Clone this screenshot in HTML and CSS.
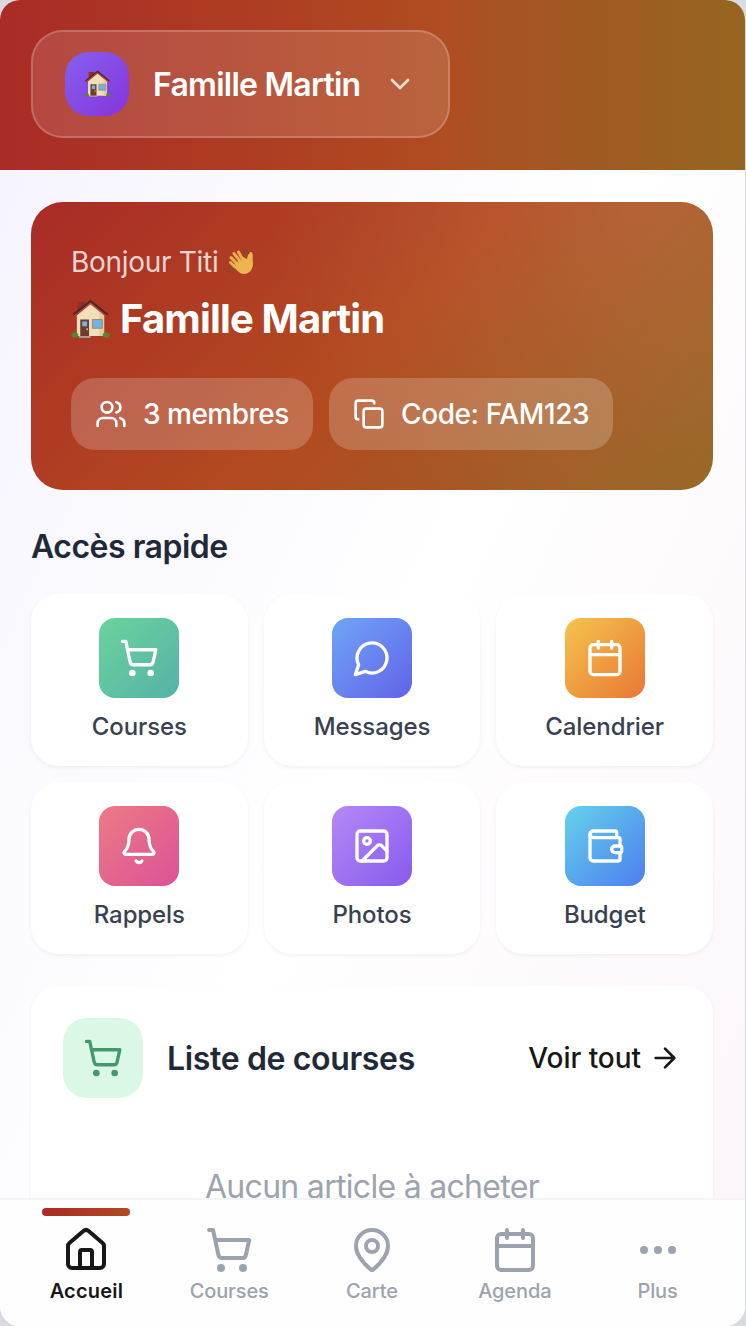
FILE: index.html
```html
<!DOCTYPE html>
<html lang="fr">
<head>
    <meta charset="UTF-8">
    <meta name="viewport" content="width=device-width, initial-scale=1.0">
    <title>Famille Martin</title>
    <link rel="stylesheet" href="styles.css">
</head>
<body>
    <!-- Shared icons -->
    <svg class="symbols" xmlns="http://www.w3.org/2000/svg">
        <symbol id="cart" viewBox="0 0 24 24">
            <circle cx="8" cy="21" r="1"/>
            <circle cx="19" cy="21" r="1"/>
            <path d="M2.05 2.05h2l2.66 12.42a2 2 0 0 0 2 1.58h9.78a2 2 0 0 0 1.95-1.57l1.65-7.43H5.12"/>
        </symbol>
        <symbol id="calendar" viewBox="0 0 24 24">
            <path d="M8 2v4M16 2v4M3 10h18"/>
            <rect x="3" y="4" width="18" height="18" rx="2"/>
        </symbol>
        <symbol id="house" viewBox="0 0 40 40">
            <path d="M7 3h8v12H7z" fill="#8e2f2c"/>
            <path d="M6 17 20 4l14 13v21H6z" fill="#f0dfb8"/>
            <path d="M29 13l5 4v21h-5z" fill="#e2cd9f"/>
            <path d="M2.500 16.500 20 2.500l17.500 14" fill="none" stroke="#4a2826" stroke-width="2.800"/>
            <path d="M3.500 17.500 20 4.500l16.500 13" fill="none" stroke="#bd4139" stroke-width="1.700"/>
            <path d="M9.500 21h9v17h-9z" fill="#6d3c2e"/>
            <path d="M11.500 23h5v5h-5z" fill="#72b5ea"/>
            <circle cx="16.500" cy="31" r="1" fill="#e5c365"/>
            <path d="M22 21h10v9H22z" fill="#6fb1e8" stroke="#a58d6c" stroke-width="1.200"/>
            <path d="M8 38h12v1.800H8z" fill="#aaa79d"/>
            <ellipse cx="4" cy="37" rx="3.500" ry="2.600" fill="#588532"/>
            <ellipse cx="36" cy="37" rx="3.500" ry="2.600" fill="#588532"/>
        </symbol>
    </svg>

    <div class="app">
        <header class="header">
            <button class="family-switch">
                <span class="family-avatar"><svg class="emoji"><use href="#house"/></svg></span>
                <span class="family-name">Famille Martin</span>
                <svg class="icon chevron" viewBox="0 0 24 24"><path d="m6 9 6 6 6-6"/></svg>
            </button>
        </header>

        <main class="content">
            <!-- Welcome card -->
            <section class="hero">
                <div class="hello"><span>Bonjour Titi</span>
                    <svg class="wave" viewBox="0 0 28 28">
                        <path d="M8 19 3.500 14.500M10 16 4 9.500M13 13 7 5.500M16 12 11.500 4" stroke="#e9ad4b" stroke-width="3" stroke-linecap="round"/>
                        <path d="M6 17 16 9l4 2c1-5 2-7 4-7 3 1 1 6 2 11 0 7-4 11-9 11-4 0-7-3-11-9z" fill="#eeb44f"/>
                        <path d="M9 18 4.500 13M11.500 15 6 8.500M14.500 12.500 9.500 6" stroke="#b87931" stroke-width=".6"/>
                        <path d="M1 19c0 3 2 5 5 6M3.500 18c0 2 1.500 3.500 3.500 4M17 2c3 0 4.500 2 5 4M15.500 4c2 0 3 1 3.500 3" fill="none" stroke="#804733" stroke-width="1.300"/>
                    </svg>
                </div>
                <h1><svg class="emoji"><use href="#house"/></svg><span>Famille Martin</span></h1>
                <div class="chips">
                    <div class="chip">
                        <svg class="icon" viewBox="0 0 24 24"><path d="M16 21v-2a4 4 0 0 0-4-4H6a4 4 0 0 0-4 4v2"/><circle cx="9" cy="7" r="4"/><path d="M22 21v-2a4 4 0 0 0-3-3.870M16 3.130a4 4 0 0 1 0 7.750"/></svg>
                        <span class="members">3 membres</span>
                    </div>
                    <div class="chip">
                        <svg class="icon" viewBox="0 0 24 24"><rect x="8" y="8" width="14" height="14" rx="2"/><path d="M4 16c-1.100 0-2-.9-2-2V4c0-1.100.9-2 2-2h10c1.100 0 2 .9 2 2"/></svg>
                        <span class="code">Code: FAM123</span>
                    </div>
                </div>
            </section>

            <!-- Quick access -->
            <h2>Accès rapide</h2>
            <div class="grid">
                <a class="tile">
                    <span class="tile-icon green"><svg class="icon"><use href="#cart"/></svg></span>
                    <span>Courses</span>
                </a>
                <a class="tile">
                    <span class="tile-icon blue"><svg class="icon" viewBox="0 0 24 24"><path d="M7.900 20A9 9 0 1 0 4 16.100L2 22Z"/></svg></span>
                    <span>Messages</span>
                </a>
                <a class="tile">
                    <span class="tile-icon orange"><svg class="icon"><use href="#calendar"/></svg></span>
                    <span>Calendrier</span>
                </a>
                <a class="tile">
                    <span class="tile-icon pink"><svg class="icon" viewBox="0 0 24 24"><path d="M10.268 21a2 2 0 0 0 3.464 0M3.262 15.326A1 1 0 0 0 4 17h16a1 1 0 0 0 .740-1.673C19.410 13.956 18 12.499 18 8A6 6 0 0 0 6 8c0 4.499-1.411 5.956-2.738 7.326"/></svg></span>
                    <span>Rappels</span>
                </a>
                <a class="tile">
                    <span class="tile-icon purple"><svg class="icon" viewBox="0 0 24 24"><rect x="3" y="3" width="18" height="18" rx="2"/><circle cx="9" cy="9" r="2"/><path d="m21 15-3.086-3.086a2 2 0 0 0-2.828 0L6 21"/></svg></span>
                    <span>Photos</span>
                </a>
                <a class="tile">
                    <span class="tile-icon cyan"><svg class="icon" viewBox="0 0 24 24"><path d="M19 7V4a1 1 0 0 0-1-1H5a2 2 0 0 0 0 4h15a1 1 0 0 1 1 1v4h-3a2 2 0 0 0 0 4h3a1 1 0 0 0 1-1v-2a1 1 0 0 0-1-1"/><path d="M3 5v14a2 2 0 0 0 2 2h15a1 1 0 0 0 1-1v-4"/></svg></span>
                    <span>Budget</span>
                </a>
            </div>

            <!-- Shopping list -->
            <section class="list-card">
                <div class="list-head">
                    <span class="list-icon"><svg class="icon"><use href="#cart"/></svg></span>
                    <h3>Liste de courses</h3>
                    <a class="see-all"><span>Voir tout</span><svg class="icon" viewBox="0 0 24 24"><path d="M5 12h14M12 5l7 7-7 7"/></svg></a>
                </div>
                <p class="empty">Aucun article à acheter</p>
            </section>
        </main>

        <nav class="tabs">
            <a class="tab active">
                <svg class="icon" viewBox="0 0 24 24"><path d="M15 21v-8a1 1 0 0 0-1-1h-4a1 1 0 0 0-1 1v8"/><path d="M3 10a2 2 0 0 1 .709-1.528l7-5.999a2 2 0 0 1 2.582 0l7 5.999A2 2 0 0 1 21 10v9a2 2 0 0 1-2 2H5a2 2 0 0 1-2-2z"/></svg>
                <span>Accueil</span>
            </a>
            <a class="tab">
                <svg class="icon"><use href="#cart"/></svg>
                <span>Courses</span>
            </a>
            <a class="tab">
                <svg class="icon" viewBox="0 0 24 24"><path d="M20 10c0 4.993-5.539 10.193-7.399 11.799a1 1 0 0 1-1.202 0C9.539 20.193 4 14.993 4 10a8 8 0 0 1 16 0"/><circle cx="12" cy="10" r="3"/></svg>
                <span>Carte</span>
            </a>
            <a class="tab">
                <svg class="icon"><use href="#calendar"/></svg>
                <span>Agenda</span>
            </a>
            <a class="tab">
                <svg class="icon" viewBox="0 0 24 24"><circle cx="12" cy="12" r="1"/><circle cx="19" cy="12" r="1"/><circle cx="5" cy="12" r="1"/></svg>
                <span>Plus</span>
            </a>
        </nav>
    </div>
</body>
</html>
```
FILE: styles.css
```css
* {
    box-sizing: border-box;
}

body {
    margin: 0;
    background-color: #d9dbe1;
    font-family: Inter, "Liberation Sans", sans-serif;
    overflow: hidden;
}

h1, h2, h3, p {
    margin: 0;
}

.symbols {
    display: none;
}

.app {
    display: flex;
    flex-direction: column;
    height: 1326px;
    margin-right: 1px;
    border-radius: 20px;
    overflow: hidden;
    background: linear-gradient(115deg, #f5f3ff 0%, #ffffff 52%, #fcf5fa 100%);
}

.icon {
    display: block;
    flex: none;
    width: 32px;
    height: 32px;
    fill: none;
    stroke: currentColor;
    stroke-width: 2;
    stroke-linecap: round;
    stroke-linejoin: round;
}

/* Header */
.header {
    flex: none;
    height: 170px;
    padding: 30px 31px;
    background: linear-gradient(90deg, #a92b26 0%, #b04621 50%, #b04d21 60%, #a75321 67%, #966522 100%);
}

.family-switch {
    display: flex;
    align-items: center;
    gap: 24px;
    width: 419px;
    height: 108px;
    padding: 0 32px;
    border: 2px solid rgba(255, 255, 255, 0.2);
    border-radius: 32px;
    background-color: rgba(255, 255, 255, 0.13);
    color: #fff;
    font: inherit;
}

.family-avatar {
    display: flex;
    align-items: center;
    justify-content: center;
    flex: none;
    width: 64px;
    height: 64px;
    border-radius: 24px;
    background: linear-gradient(135deg, #8560ed, #8733dc);
}

.family-avatar .emoji {
    width: 27px;
    height: 27px;
    margin-bottom: 2px;
}

.family-name {
    width: 207px;
    font-size: 32px;
    font-weight: 600;
    letter-spacing: -0.75px;
    text-align: left;
    white-space: nowrap;
}

.chevron {
    opacity: 0.8;
}

/* Main content */
.content {
    flex: 1;
    min-height: 0;
    overflow: hidden;
    padding: 32px 32px 0 31px;
}

.hero {
    height: 288px;
    padding: 40px;
    border-radius: 32px;
    color: #fff;
    background:
        radial-gradient(circle at 90% 0, rgba(255, 255, 255, 0.1), rgba(255, 255, 255, 0) 380px),
        linear-gradient(135deg, #a92b26 0%, #b34a20 50%, #966522 100%);
}

.hello {
    display: flex;
    align-items: center;
    gap: 9px;
    height: 40px;
    font-size: 28px;
    color: rgba(255, 255, 255, 0.8);
    letter-spacing: -0.3px;
}

.wave {
    width: 28px;
    height: 28px;
}

h1 {
    display: flex;
    align-items: center;
    gap: 10px;
    height: 56px;
    margin-top: 8px;
    font-size: 40px;
    font-weight: 700;
    letter-spacing: -0.85px;
}

h1 .emoji {
    width: 39px;
    height: 39px;
}

.chips {
    display: flex;
    gap: 16px;
    margin-top: 32px;
}

.chip {
    display: flex;
    align-items: center;
    gap: 16px;
    height: 72px;
    padding: 0 24px;
    border-radius: 24px;
    background-color: rgba(255, 255, 255, 0.2);
    font-size: 28px;
    font-weight: 500;
    white-space: nowrap;
}

.members {
    width: 146px;
    letter-spacing: -0.5px;
}

.code {
    width: 188px;
    letter-spacing: -0.4px;
}

h2 {
    margin: 35px 0 25px;
    font-size: 32px;
    line-height: 44px;
    font-weight: 600;
    letter-spacing: -0.5px;
    color: #1f2937;
}

.grid {
    display: grid;
    grid-template-columns: repeat(3, 1fr);
    gap: 16px;
}

.tile {
    display: flex;
    flex-direction: column;
    align-items: center;
    gap: 13px;
    height: 172px;
    padding: 24px 24px 23px;
    border-radius: 28px;
    background-color: #fff;
    box-shadow: 0 2px 4px rgba(0, 0, 0, 0.05);
    font-size: 24px;
    line-height: 32px;
    font-weight: 500;
    letter-spacing: -0.1px;
    color: #374151;
}

.tile-icon {
    display: flex;
    align-items: center;
    justify-content: center;
    flex: none;
    width: 80px;
    height: 80px;
    border-radius: 16px;
    color: #fff;
}

.tile-icon .icon,
.list-icon .icon {
    width: 40px;
    height: 40px;
}

.green { background: linear-gradient(135deg, #6bd39c, #55b2a8); }
.blue { background: linear-gradient(135deg, #70a5f7, #6163e8); }
.orange { background: linear-gradient(135deg, #f4c44d, #e97735); }
.pink { background: linear-gradient(135deg, #ec7b84, #db5297); }
.purple { background: linear-gradient(135deg, #b688f7, #865bed); }
.cyan { background: linear-gradient(135deg, #64d2eb, #4d7eef); }

/* Shopping list */
.list-card {
    height: 340px;
    margin-top: 32px;
    padding: 32px;
    border-radius: 28px;
    background-color: #fff;
    box-shadow: 0 2px 4px rgba(0, 0, 0, 0.05);
}

.list-head {
    display: flex;
    align-items: center;
    gap: 24px;
}

.list-icon {
    display: flex;
    align-items: center;
    justify-content: center;
    width: 80px;
    height: 80px;
    border-radius: 24px;
    background-color: #dbf8e6;
    color: #42986b;
}

h3 {
    font-size: 32px;
    font-weight: 600;
    letter-spacing: -0.35px;
    color: #1f2937;
}

.see-all {
    display: flex;
    align-items: center;
    gap: 8px;
    margin-left: auto;
    font-size: 28px;
    font-weight: 500;
    letter-spacing: -0.05px;
    color: #171717;
}

.empty {
    margin-top: 65px;
    font-size: 32px;
    line-height: 48px;
    letter-spacing: -0.7px;
    text-align: center;
    color: #9ca3af;
}

/* Bottom navigation */
.tabs {
    display: flex;
    flex: none;
    height: 128px;
    padding: 0 16px 0 15px;
    border-top: 2px solid #f3f4f6;
    background-color: #fefefe;
}

.tab {
    position: relative;
    display: flex;
    flex: 1;
    flex-direction: column;
    align-items: center;
    gap: 4px;
    padding-top: 26px;
    font-size: 20px;
    line-height: 26px;
    font-weight: 500;
    letter-spacing: -0.1px;
    color: #9ca3af;
}

.tab .icon {
    width: 48px;
    height: 48px;
}

.tab.active {
    font-weight: 600;
    letter-spacing: 0.2px;
    color: #171717;
}

.tab.active::before {
    content: "";
    position: absolute;
    top: 8px;
    width: 88px;
    height: 8px;
    border-radius: 4px;
    background: linear-gradient(90deg, #a92b26, #b24921);
}
```
